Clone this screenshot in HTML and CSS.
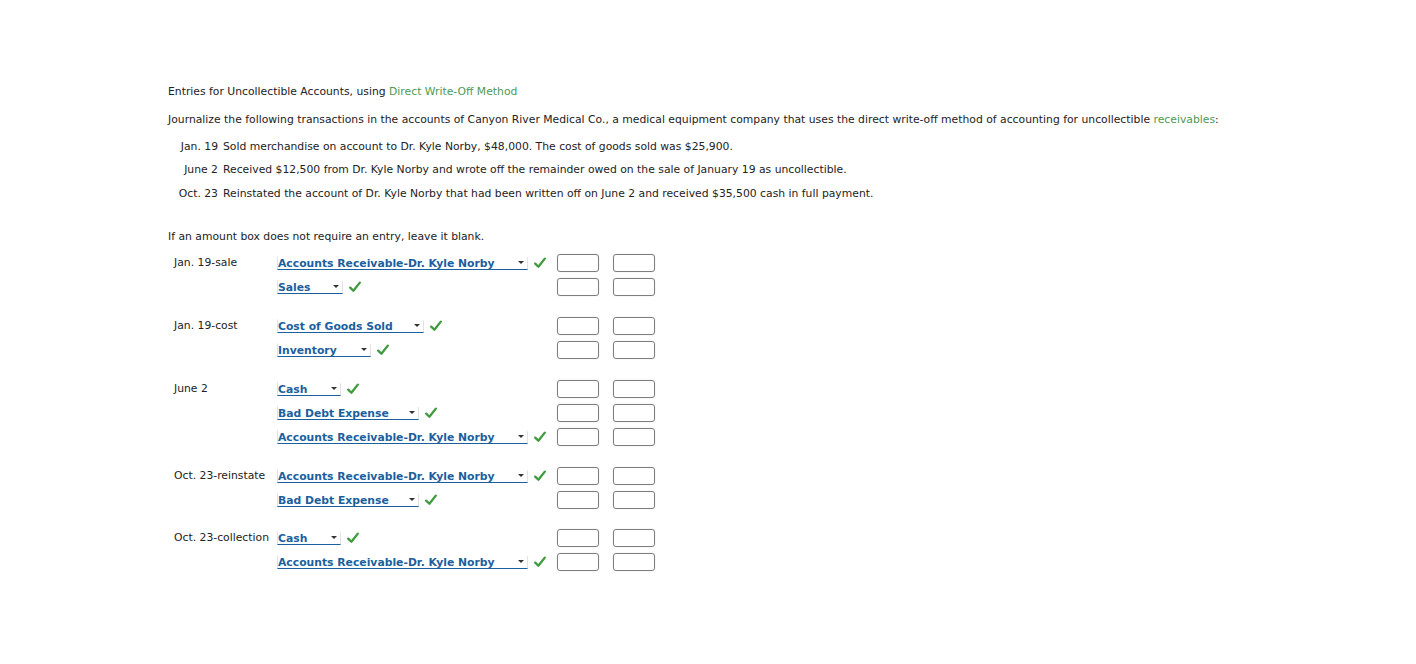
FILE: index.html
```html
<!DOCTYPE html>
<html>
<head>
<meta charset="utf-8">
<link rel="stylesheet" href="styles.css">
</head>
<body>
<svg width="0" height="0" class="defs"><defs><symbol id="ck" viewBox="0 0 12 12"><path d="M1.2 6.6 L4.4 9.8 L10.8 1.6" fill="none" stroke="#3e9b3e" stroke-width="2.3" stroke-linecap="round" stroke-linejoin="round"/></symbol></defs></svg>
<div class="page">
  <p class="title">Entries for Uncollectible Accounts, using <span class="green">Direct Write-Off Method</span></p>
  <p class="intro">Journalize the following transactions in the accounts of Canyon River Medical Co., a medical equipment company that uses the direct write-off method of accounting for uncollectible <span class="green">receivables</span>:</p>
  <div class="trans">
    <div class="trow"><span class="tdate">Jan. 19</span><span>Sold merchandise on account to Dr. Kyle Norby, $48,000. The cost of goods sold was $25,900.</span></div>
    <div class="trow"><span class="tdate">June 2</span><span>Received $12,500 from Dr. Kyle Norby and wrote off the remainder owed on the sale of January 19 as uncollectible.</span></div>
    <div class="trow"><span class="tdate">Oct. 23</span><span>Reinstated the account of Dr. Kyle Norby that had been written off on June 2 and received $35,500 cash in full payment.</span></div>
  </div>
  <p class="note">If an amount box does not require an entry, leave it blank.</p>

  <div class="journal">
    <div class="group">
      <div class="row"><div class="lbl">Jan. 19-sale</div><div class="acct"><span class="sel w250">Accounts Receivable-Dr. Kyle Norby<i class="arr"></i></span><svg class="chk"><use href="#ck"/></svg></div><span class="amt"></span><span class="amt"></span></div>
      <div class="row"><div class="lbl"></div><div class="acct"><span class="sel w65">Sales<i class="arr"></i></span><svg class="chk"><use href="#ck"/></svg></div><span class="amt"></span><span class="amt"></span></div>
    </div>
    <div class="group">
      <div class="row"><div class="lbl">Jan. 19-cost</div><div class="acct"><span class="sel w146">Cost of Goods Sold<i class="arr"></i></span><svg class="chk"><use href="#ck"/></svg></div><span class="amt"></span><span class="amt"></span></div>
      <div class="row"><div class="lbl"></div><div class="acct"><span class="sel w93">Inventory<i class="arr"></i></span><svg class="chk"><use href="#ck"/></svg></div><span class="amt"></span><span class="amt"></span></div>
    </div>
    <div class="group">
      <div class="row"><div class="lbl">June 2</div><div class="acct"><span class="sel w63">Cash<i class="arr"></i></span><svg class="chk"><use href="#ck"/></svg></div><span class="amt"></span><span class="amt"></span></div>
      <div class="row"><div class="lbl"></div><div class="acct"><span class="sel w141">Bad Debt Expense<i class="arr"></i></span><svg class="chk"><use href="#ck"/></svg></div><span class="amt"></span><span class="amt"></span></div>
      <div class="row"><div class="lbl"></div><div class="acct"><span class="sel w250">Accounts Receivable-Dr. Kyle Norby<i class="arr"></i></span><svg class="chk"><use href="#ck"/></svg></div><span class="amt"></span><span class="amt"></span></div>
    </div>
    <div class="group">
      <div class="row"><div class="lbl">Oct. 23-reinstate</div><div class="acct"><span class="sel w250">Accounts Receivable-Dr. Kyle Norby<i class="arr"></i></span><svg class="chk"><use href="#ck"/></svg></div><span class="amt"></span><span class="amt"></span></div>
      <div class="row"><div class="lbl"></div><div class="acct"><span class="sel w141">Bad Debt Expense<i class="arr"></i></span><svg class="chk"><use href="#ck"/></svg></div><span class="amt"></span><span class="amt"></span></div>
    </div>
    <div class="group">
      <div class="row"><div class="lbl">Oct. 23-collection</div><div class="acct"><span class="sel w63">Cash<i class="arr"></i></span><svg class="chk"><use href="#ck"/></svg></div><span class="amt"></span><span class="amt"></span></div>
      <div class="row"><div class="lbl"></div><div class="acct"><span class="sel w250">Accounts Receivable-Dr. Kyle Norby<i class="arr"></i></span><svg class="chk"><use href="#ck"/></svg></div><span class="amt"></span><span class="amt"></span></div>
    </div>
  </div>
</div>
</body>
</html>
```

FILE: styles.css
```css
html, body { margin: 0; padding: 0; background: #fff; }
body {
  font-family: "DejaVu Sans", Verdana, sans-serif;
  font-size: 10.8px;
  color: #222;
}
.defs { position: absolute; width: 0; height: 0; }
.page { padding: 85px 0 0 168px; }
p { margin: 0; }
.title { line-height: 14px; }
.intro { margin-top: 14px; line-height: 14px; }
.green { color: #4e9a53; }
.trans { margin-top: 8px; }
.trow { display: flex; height: 23.5px; line-height: 14px; align-items: center; }
.tdate { width: 50px; text-align: right; margin-right: 5px; flex: none; }
.note { margin-top: 24px; line-height: 14px; }
.journal { margin-top: 7px; }
.group { margin-bottom: 15px; }
.group:nth-child(4) { margin-bottom: 14px; }
.row { display: flex; align-items: center; height: 24px; }
.lbl { width: 109px; padding-left: 6px; box-sizing: border-box; flex: none; white-space: nowrap; }
.acct { width: 280px; flex: none; display: flex; align-items: center; }
.sel {
  position: relative;
  display: inline-block;
  box-sizing: border-box;
  height: 14px;
  line-height: 13px;
  font-weight: bold;
  color: #1b5f9e;
  border: 1px solid #e2e2e2;
  border-bottom: 1.5px solid #1b5f9e;
  border-top-right-radius: 3px;
  border-top-color: transparent;
  overflow: hidden;
  white-space: nowrap;
  flex: none;
}
.arr {
  position: absolute;
  right: 3px;
  top: 4px;
  width: 0; height: 0;
  border-left: 3px solid transparent;
  border-right: 3px solid transparent;
  border-top: 3px solid #333;
}
.w250 { width: 251px; }
.w65 { width: 66px; }
.w146 { width: 147px; }
.w93 { width: 94px; }
.w63 { width: 64px; }
.w141 { width: 142px; }
.chk { width: 12px; height: 12px; margin-left: 6px; flex: none; }
.amt {
  width: 42px; height: 18px;
  box-sizing: border-box;
  border: 1.5px solid #7d7d7d;
  border-radius: 3px;
  box-shadow: 0 0 1px #bbb;
  margin-right: 14px;
  flex: none;
}
```
